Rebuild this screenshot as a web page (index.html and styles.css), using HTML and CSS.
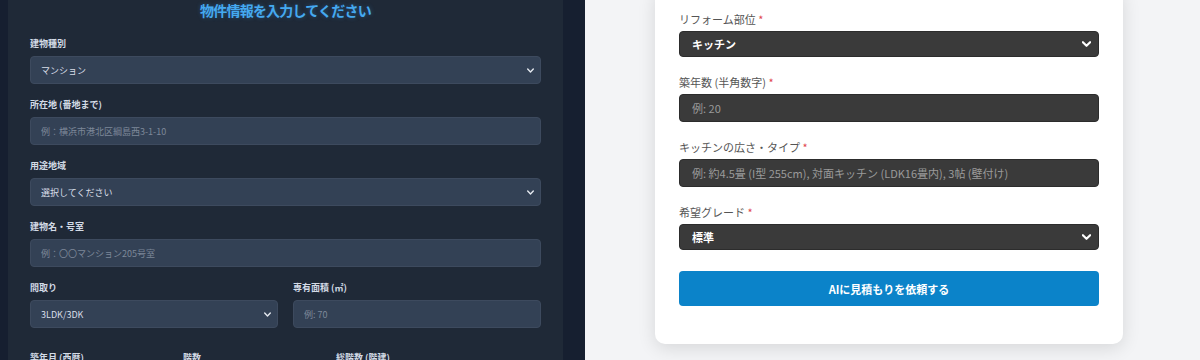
FILE: index.html
```html
<!DOCTYPE html>
<html lang="ja">
<head>
    <meta charset="utf-8">
    <title>リフォーム見積もり</title>
    <link rel="stylesheet" href="styles.css">
</head>
<body>
    <div class="left-wrap">
        <div class="panel">
            <h2 class="panel-title">物件情報を入力してください</h2>

            <div class="field">
                <label class="dlabel">建物種別</label>
                <div class="select-box">
                    <select class="dcontrol"><option>マンション</option></select>
                    <svg class="chev chev-d" viewBox="0 0 10 6"><path d="M1 1l4 4 4-4" /></svg>
                </div>
            </div>

            <div class="field">
                <label class="dlabel">所在地 (番地まで)</label>
                <input class="dcontrol" type="text" placeholder="例：横浜市港北区綱島西3-1-10">
            </div>

            <div class="field">
                <label class="dlabel">用途地域</label>
                <div class="select-box">
                    <select class="dcontrol"><option>選択してください</option></select>
                    <svg class="chev chev-d" viewBox="0 0 10 6"><path d="M1 1l4 4 4-4" /></svg>
                </div>
            </div>

            <div class="field">
                <label class="dlabel">建物名・号室</label>
                <input class="dcontrol" type="text" placeholder="例：〇〇マンション205号室">
            </div>

            <div class="row-2">
                <div class="field">
                    <label class="dlabel">間取り</label>
                    <div class="select-box">
                        <select class="dcontrol"><option>3LDK/3DK</option></select>
                        <svg class="chev chev-d" viewBox="0 0 10 6"><path d="M1 1l4 4 4-4" /></svg>
                    </div>
                </div>
                <div class="field">
                    <label class="dlabel">専有面積 (㎡)</label>
                    <input class="dcontrol" type="text" placeholder="例: 70">
                </div>
            </div>

            <div class="row-3">
                <div class="field"><label class="dlabel">築年月 (西暦)</label></div>
                <div class="field"><label class="dlabel">階数</label></div>
                <div class="field"><label class="dlabel">総階数 (階建)</label></div>
            </div>
        </div>
    </div>

    <div class="right-wrap">
        <div class="card">
            <div class="lfield">
                <label class="llabel">リフォーム部位 <span class="req">*</span></label>
                <div class="select-box">
                    <select class="lcontrol lselect"><option>キッチン</option></select>
                    <svg class="chev chev-l" viewBox="0 0 10 6"><path d="M1 1l4 4 4-4" /></svg>
                </div>
            </div>

            <div class="lfield">
                <label class="llabel">築年数 (半角数字) <span class="req">*</span></label>
                <input class="lcontrol" type="text" placeholder="例: 20">
            </div>

            <div class="lfield">
                <label class="llabel">キッチンの広さ・タイプ <span class="req">*</span></label>
                <input class="lcontrol" type="text" placeholder="例: 約4.5畳 (I型 255cm), 対面キッチン (LDK16畳内), 3帖 (壁付け)">
            </div>

            <div class="lfield">
                <label class="llabel">希望グレード <span class="req">*</span></label>
                <div class="select-box">
                    <select class="lcontrol lselect"><option>標準</option></select>
                    <svg class="chev chev-l" viewBox="0 0 10 6"><path d="M1 1l4 4 4-4" /></svg>
                </div>
            </div>

            <button class="submit-btn">AIに見積もりを依頼する</button>
        </div>
    </div>
</body>
</html>
```

FILE: styles.css
```css
body {
    margin: 0;
    padding: 0;
    height: 360px;
    overflow: hidden;
    display: flex;
    font-family: "Noto Sans CJK JP", "Noto Sans", sans-serif;
    background: #f3f4f6;
}

/* left: dark property form */
.left-wrap {
    width: 585px;
    background: #161f30;
    padding-left: 8px;
    box-sizing: border-box;
    flex-shrink: 0;
}
.panel {
    width: 555px;
    height: 100%;
    background: #1f2937;
    padding: 0 22px;
    box-sizing: border-box;
}
.panel-title {
    margin: 0 0 18px;
    text-align: center;
    font-size: 14px;
    line-height: 20px;
    font-weight: 700;
    letter-spacing: -0.8px;
    color: #45a9f0;
    text-shadow: 0 0 4px rgba(56, 160, 240, 0.35);
}
.field {
    margin-bottom: 15px;
}
.dlabel {
    display: block;
    font-size: 9px;
    line-height: 12px;
    font-weight: 700;
    color: #d3dbe6;
    margin-bottom: 6px;
}
.dcontrol {
    display: block;
    width: 100%;
    height: 28px;
    box-sizing: border-box;
    padding: 0 10px;
    background: #334155;
    border: 1px solid #3d4a5e;
    border-radius: 4px;
    color: #d8dee8;
    font-family: inherit;
    font-size: 9px;
    outline: none;
    appearance: none;
    -webkit-appearance: none;
}
.dcontrol::placeholder {
    color: #7d8899;
}
.row-2 {
    display: grid;
    grid-template-columns: 1fr 1fr;
    column-gap: 15px;
}
.row-3 {
    display: grid;
    grid-template-columns: 138px 138px 1fr;
    column-gap: 15px;
    padding-top: 9px;
}

.select-box {
    position: relative;
}
.chev {
    position: absolute;
    top: 50%;
    fill: none;
    stroke-linecap: round;
    stroke-linejoin: round;
    pointer-events: none;
}
.chev-d {
    right: 7px;
    width: 7px;
    height: 5px;
    margin-top: -2px;
    stroke: #e5e9f0;
    stroke-width: 2;
}

/* right: estimate card */
.right-wrap {
    flex: 1;
    padding-left: 70px;
}
.card {
    width: 468px;
    margin-top: -12px;
    padding: 24px 24px 38px;
    box-sizing: border-box;
    background: #ffffff;
    border-radius: 10px;
    box-shadow: 0 4px 18px rgba(0, 0, 0, 0.12);
}
.lfield {
    margin-bottom: 18px;
}
.llabel {
    display: block;
    font-size: 11px;
    line-height: 14px;
    color: #555555;
    margin-bottom: 5px;
}
.req {
    color: #e0464b;
}
.lcontrol {
    display: block;
    width: 100%;
    height: 28px;
    box-sizing: border-box;
    padding: 0 12px;
    background: #3a3a3a;
    border: 1px solid #2c2c2c;
    border-radius: 4px;
    color: #ffffff;
    font-family: inherit;
    font-size: 11px;
    outline: none;
    appearance: none;
    -webkit-appearance: none;
}
.lcontrol::placeholder {
    color: #9a9a9a;
}
.lselect {
    height: 26px;
    font-weight: 700;
}
.chev-l {
    right: 8px;
    width: 9px;
    height: 6px;
    margin-top: -3px;
    stroke: #ffffff;
    stroke-width: 2.4;
}
.submit-btn {
    display: block;
    width: 100%;
    height: 35px;
    margin-top: 21px;
    background: #0b83c9;
    color: #ffffff;
    border: none;
    border-radius: 4px;
    font-family: inherit;
    font-size: 11px;
    font-weight: 700;
    cursor: pointer;
}
```
